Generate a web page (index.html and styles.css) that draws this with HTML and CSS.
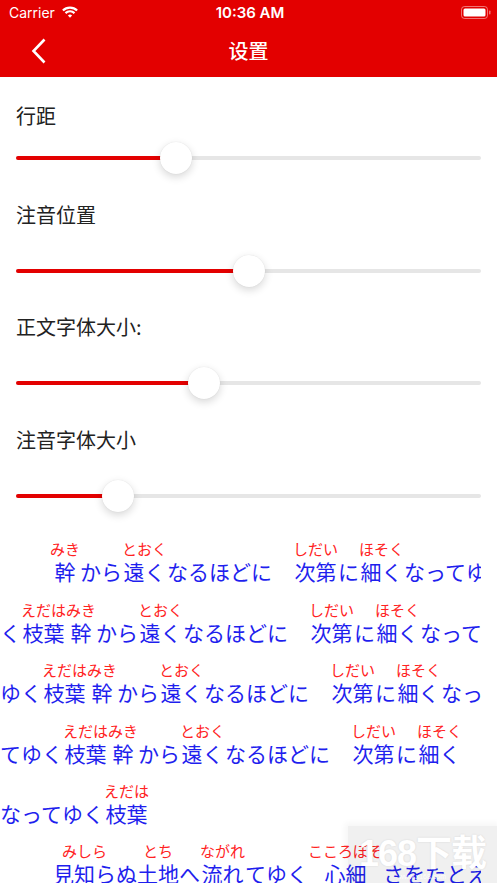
FILE: index.html
```html
<!DOCTYPE html>
<html>
<head>
    <meta charset="utf-8">
    <title>设置</title>
    <link rel="stylesheet" href="styles.css">
</head>
<body>
<div class="page">
    <div class="top-bar">
        <div class="status-bar">
            <div class="status-left">
                <span>Carrier</span>
                <svg class="wifi" width="18" height="13" viewBox="0 0 18 13">
                    <path d="M1.9 5.6 A10 10 0 0 1 16.1 5.6" fill="none" stroke="#fff" stroke-width="2.2"/>
                    <path d="M4.5 8.1 A6.4 6.4 0 0 1 13.5 8.1" fill="none" stroke="#fff" stroke-width="2.2"/>
                    <path d="M9 12.8 L6.9 10.6 A3 3 0 0 1 11.1 10.6 Z" fill="#fff"/>
                </svg>
            </div>
            <div class="status-time">10:36 AM</div>
            <div class="status-right">
                <svg width="30" height="14" viewBox="0 0 30 14">
                    <rect x="0.5" y="0.5" width="26" height="12" rx="3" fill="none" stroke="rgba(255,255,255,0.45)"/>
                    <rect x="2.5" y="2.5" width="22" height="8" rx="1.5" fill="#fff"/>
                    <rect x="28" y="4.5" width="1.5" height="4" rx="0.7" fill="rgba(255,255,255,0.45)"/>
                </svg>
            </div>
        </div>
        <div class="nav-bar">
            <div class="nav-back">
                <svg width="16" height="26" viewBox="0 0 16 26">
                    <path d="M13.5 1.5 L2.5 13 L13.5 24.5" fill="none" stroke="#fff" stroke-width="2.6"/>
                </svg>
            </div>
            <div class="nav-title">设置</div>
            <div></div>
        </div>
    </div>

    <div class="settings">
        <div class="setting setting-first">
            <div class="setting-label">行距</div>
            <div class="slider">
                <div class="slider-track"><div class="slider-fill" style="width: 34.4%"></div></div>
                <div class="slider-thumb" style="left: 34.4%"></div>
            </div>
        </div>
        <div class="setting">
            <div class="setting-label">注音位置</div>
            <div class="slider">
                <div class="slider-track"><div class="slider-fill" style="width: 50.1%"></div></div>
                <div class="slider-thumb" style="left: 50.1%"></div>
            </div>
        </div>
        <div class="setting">
            <div class="setting-label">正文字体大小:</div>
            <div class="slider">
                <div class="slider-track"><div class="slider-fill" style="width: 40.5%"></div></div>
                <div class="slider-thumb" style="left: 40.5%"></div>
            </div>
        </div>
        <div class="setting">
            <div class="setting-label">注音字体大小</div>
            <div class="slider">
                <div class="slider-track"><div class="slider-fill" style="width: 21.9%"></div></div>
                <div class="slider-thumb" style="left: 21.9%"></div>
            </div>
        </div>
    </div>

    <!-- 预览 -->
    <div class="preview">
        <div class="line line-indent"><ruby>幹<rt>みき</rt></ruby>から<ruby>遠く<rt>とおく</rt></ruby>なるほどに　<ruby>次第<rt>しだい</rt></ruby>に<ruby>細く<rt>ほそく</rt></ruby>なってゆく</div>
        <div class="line">く<ruby>枝葉<rt>えだは</rt></ruby><ruby>幹<rt>みき</rt></ruby>から<ruby>遠く<rt>とおく</rt></ruby>なるほどに　<ruby>次第<rt>しだい</rt></ruby>に<ruby>細く<rt>ほそく</rt></ruby>なって</div>
        <div class="line">ゆく<ruby>枝葉<rt>えだは</rt></ruby><ruby>幹<rt>みき</rt></ruby>から<ruby>遠く<rt>とおく</rt></ruby>なるほどに　<ruby>次第<rt>しだい</rt></ruby>に<ruby>細く<rt>ほそく</rt></ruby>なっ</div>
        <div class="line">てゆく<ruby>枝葉<rt>えだは</rt></ruby><ruby>幹<rt>みき</rt></ruby>から<ruby>遠く<rt>とおく</rt></ruby>なるほどに　<ruby>次第<rt>しだい</rt></ruby>に<ruby>細く<rt>ほそく</rt></ruby></div>
        <div class="line">なってゆく<ruby>枝葉<rt>えだは</rt></ruby></div>
        <div class="line line-indent-wide"><ruby>見知ら<rt>みしら</rt></ruby>ぬ<ruby>土地<rt>とち</rt></ruby>へ<ruby>流れ<rt>ながれ</rt></ruby>てゆく<ruby>心細<rt>こころぼそ</rt></ruby>さをたとえ</div>
    </div>

    <div class="watermark">
        <span class="watermark-logo">168下载</span>
        <span class="watermark-url">www.x168.com</span>
    </div>
</div>
</body>
</html>
```

FILE: styles.css
```css
body {
    margin: 0;
    padding: 0;
    background-color: #fff;
}

.page {
    position: relative;
    height: 100vh;
    overflow: hidden;
}

/* 顶部 */
.top-bar {
    background-color: #e30000;
    color: #fff;
}

.status-bar {
    height: 24px;
    display: grid;
    grid-template-columns: 1fr auto 1fr;
    align-items: center;
    padding: 0 6px 0 9px;
    font-family: Inter, "Liberation Sans", sans-serif;
    font-size: 14px;
}

.status-left {
    display: flex;
    align-items: center;
    gap: 6px;
}

.status-time {
    font-weight: 600;
    font-size: 15px;
}

.status-right {
    display: flex;
    justify-content: flex-end;
    padding-top: 2px;
}

.wifi {
    margin-top: -1px;
}

.nav-bar {
    height: 53px;
    display: grid;
    grid-template-columns: 1fr auto 1fr;
    align-items: center;
}

.nav-back {
    padding-left: 31px;
    display: flex;
}

.nav-title {
    font-family: "Noto Sans CJK SC", sans-serif;
    font-size: 20px;
    font-weight: 500;
}

/* 设置项 */
.settings {
    padding: 27px 16px 0;
}

.setting {
    margin-bottom: 28.5px;
}

.setting-label {
    font-family: "Noto Sans CJK SC", sans-serif;
    font-size: 20px;
    line-height: 24px;
    color: #222;
    margin-bottom: 28px;
}

.setting-first .setting-label {
    margin-bottom: 14px;
}

.slider {
    position: relative;
    height: 32px;
    display: flex;
    align-items: center;
}

.slider-track {
    flex: 1;
    height: 4px;
    border-radius: 2px;
    background-color: #e6e6e6;
    overflow: hidden;
}

.slider-fill {
    height: 100%;
    background-color: #e30000;
}

.slider-thumb {
    position: absolute;
    top: 0;
    width: 32px;
    height: 32px;
    margin-left: -16px;
    border-radius: 50%;
    background-color: #fff;
    box-shadow: 0 3px 8px rgba(0, 0, 0, 0.16), 0 0 1px rgba(0, 0, 0, 0.12);
}

/* 预览文字 */
.preview {
    margin-top: 3px;
    width: 481px;
    overflow: hidden;
    font-family: "Noto Sans CJK JP", sans-serif;
    font-size: 21px;
    color: #1f1fee;
}

.line {
    height: 60.4px;
    box-sizing: border-box;
    padding-bottom: 17px;
    display: flex;
    align-items: flex-end;
    line-height: 24px;
    white-space: pre;
}

.line-indent {
    padding-left: 50px;
}

.line-indent-wide {
    padding-left: 53px;
}

ruby {
    display: flex;
    flex-direction: column;
    align-items: center;
}

rt {
    display: block;
    order: -1;
    font-size: 15px;
    line-height: 16px;
    margin-bottom: 2px;
    color: #f22;
}

.watermark {
    position: absolute;
    right: 0;
    bottom: 0;
    width: 149px;
    height: 57px;
    background-color: rgba(0, 0, 0, 0.06);
    box-shadow: 0 0 6px 3px rgba(0, 0, 0, 0.04);
    display: flex;
    flex-direction: column;
    align-items: center;
    color: #fff;
    font-family: "Liberation Sans", "Noto Sans CJK SC", sans-serif;
}

.watermark-logo {
    font-size: 36px;
    font-weight: bold;
    line-height: 38px;
    margin-top: 9px;
    letter-spacing: -1px;
    text-shadow: 0 0 2px rgba(0, 0, 0, 0.12);
}

.watermark-url {
    font-size: 7px;
    opacity: 0.9;
}
```
